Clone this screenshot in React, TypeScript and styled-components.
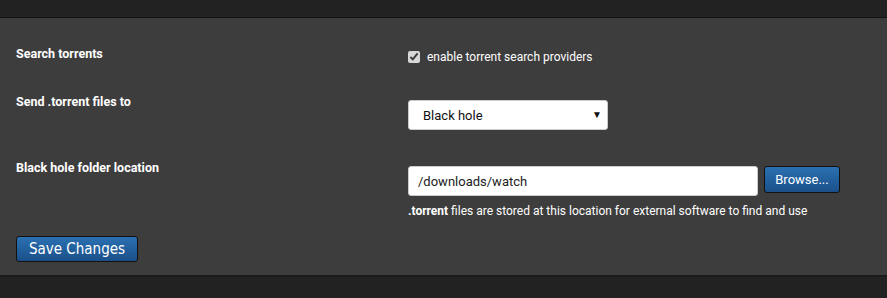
import React, { useState } from 'react';
import styled, { createGlobalStyle } from 'styled-components';

const Global = createGlobalStyle`
  html, body {
    margin: 0;
    padding: 0;
    background: #222222;
    font-family: Roboto, 'Liberation Sans', sans-serif;
  }
`;

const TopBar = styled.div`
  height: 17px;
  background: #222222;
  border-bottom: 1px solid #111111;
`;

const Panel = styled.form`
  background: #3d3d3d;
  padding: 28px 16px 13px 16px;
  border-bottom: 2px solid #1a1a1a;
`;

const Row = styled.div<{ $gap: number }>`
  display: grid;
  grid-template-columns: 392px 1fr;
  margin-bottom: ${(p) => p.$gap}px;
`;

const Label = styled.div`
  color: #ffffff;
  font-weight: bold;
  font-size: 12.5px;
  line-height: 16px;
`;

const Field = styled.div<{ $top: number }>`
  display: flex;
  flex-direction: column;
  padding-top: ${(p) => p.$top}px;
`;

const CheckLine = styled.label`
  display: flex;
  align-items: center;
  gap: 7px;
  color: #ffffff;
  font-size: 12px;
  line-height: 16px;
`;

const Check = styled.input`
  margin: 0;
  width: 12px;
  height: 12px;
  accent-color: #d8d8d8;
`;

const SelectBox = styled.div`
  position: relative;
  width: 200px;
  height: 30px;
  box-sizing: border-box;
  background: #ffffff;
  border: 1px solid #cccccc;
  border-radius: 3px;
  display: flex;
  align-items: center;
  padding-left: 14px;
  font-size: 13px;
  color: #111111;
`;

const Arrow = styled.span`
  position: absolute;
  right: 5px;
  top: 8px;
  font-size: 10px;
  color: #111111;
`;

const InputLine = styled.div`
  display: flex;
  align-items: flex-start;
  gap: 6px;
`;

const TextInput = styled.input`
  width: 350px;
  height: 30px;
  box-sizing: border-box;
  background: #ffffff;
  border: 1px solid #cccccc;
  border-radius: 3px;
  padding: 0 9px;
  font-family: Roboto, 'Liberation Sans', sans-serif;
  font-size: 13px;
  color: #222222;
  outline: none;
`;

const BlueButton = styled.button<{ $big?: boolean }>`
  background: linear-gradient(to bottom, #2b70b2 0%, #1a5089 100%);
  border: 1px solid #111111;
  border-radius: 3px;
  color: #ffffff;
  cursor: pointer;
  font-family: ${(p) =>
    p.$big ? "'DejaVu Sans Condensed', 'DejaVu Sans', Verdana, sans-serif" : "Roboto, 'Liberation Sans', sans-serif"};
  font-size: ${(p) => (p.$big ? 15 : 13)}px;
  height: ${(p) => (p.$big ? 26 : 27)}px;
  width: ${(p) => (p.$big ? 122 : 76)}px;
  padding: 0;
`;

const Help = styled.div`
  color: #ffffff;
  font-size: 12px;
  line-height: 16px;
  margin-top: 7px;
  b {
    font-weight: bold;
  }
`;

const Bottom = styled.div`
  height: 22px;
  background: #222222;
`;

export default function App() {
  const [search, setSearch] = useState(true);
  const [folder, setFolder] = useState('/downloads/watch');

  return (
    <>
      <Global />
      <TopBar />
      <Panel onSubmit={(e) => e.preventDefault()}>
        <Row $gap={29}>
          <Label>Search torrents</Label>
          <Field $top={3}>
            <CheckLine>
              <Check type="checkbox" checked={search} onChange={() => setSearch(!search)} />
              enable torrent search providers
            </CheckLine>
          </Field>
        </Row>
        <Row $gap={30}>
          <Label>Send .torrent files to</Label>
          <Field $top={6}>
            <SelectBox>
              Black hole
              <Arrow>▼</Arrow>
            </SelectBox>
          </Field>
        </Row>
        <Row $gap={17}>
          <Label>Black hole folder location</Label>
          <Field $top={6}>
            <InputLine>
              <TextInput value={folder} onChange={(e) => setFolder(e.target.value)} />
              <BlueButton type="button">Browse...</BlueButton>
            </InputLine>
            <Help>
              <b>.torrent</b> files are stored at this location for external software to find and use
            </Help>
          </Field>
        </Row>
        <BlueButton $big type="submit">Save Changes</BlueButton>
      </Panel>
      <Bottom />
    </>
  );
}
